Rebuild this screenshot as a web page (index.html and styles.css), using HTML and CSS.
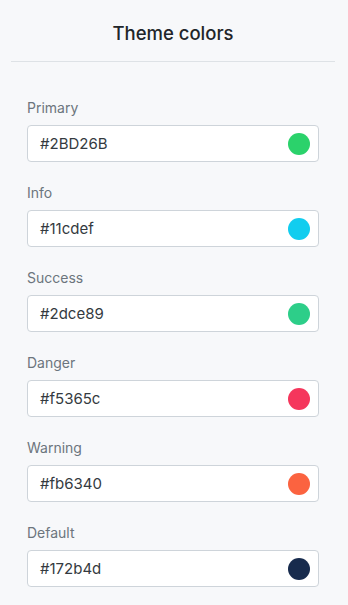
FILE: index.html
```html
<!DOCTYPE html>
<html lang="en">
<head>
<meta charset="utf-8">
<title>Theme colors</title>
<link rel="stylesheet" href="styles.css">
</head>
<body>
<div class="panel">
  <div class="header"><h1 class="title">Theme colors</h1></div>
  <div class="fields">
    <div class="field">
      <div class="label">Primary</div>
      <div class="input"><span class="value">#2BD26B</span><span class="swatch" style="background:#2BD26B"></span></div>
    </div>
    <div class="field">
      <div class="label">Info</div>
      <div class="input"><span class="value">#11cdef</span><span class="swatch" style="background:#11cdef"></span></div>
    </div>
    <div class="field">
      <div class="label">Success</div>
      <div class="input"><span class="value">#2dce89</span><span class="swatch" style="background:#2dce89"></span></div>
    </div>
    <div class="field">
      <div class="label">Danger</div>
      <div class="input"><span class="value">#f5365c</span><span class="swatch" style="background:#f5365c"></span></div>
    </div>
    <div class="field">
      <div class="label">Warning</div>
      <div class="input"><span class="value">#fb6340</span><span class="swatch" style="background:#fb6340"></span></div>
    </div>
    <div class="field">
      <div class="label">Default</div>
      <div class="input"><span class="value">#172b4d</span><span class="swatch" style="background:#172b4d"></span></div>
    </div>
  </div>
</div>
</body>
</html>
```
FILE: styles.css
```css
html, body {
  margin: 0;
  padding: 0;
  background: #f7f8fa;
}
body {
  font-family: Inter, "Noto Sans", sans-serif;
  padding: 0 13px 0 11px;
}
.header {
  padding: 20px 0 14px;
  border-bottom: 1px solid #dee2e6;
  text-align: center;
}
.title {
  margin: 0;
  font-size: 18.5px;
  line-height: 27px;
  font-weight: 500;
  color: #212529;
}
.fields {
  padding: 35px 16px 0;
  display: flex;
  flex-direction: column;
  gap: 20px;
}
.field {
  display: flex;
  flex-direction: column;
  gap: 7px;
}
.label {
  font-size: 14px;
  line-height: 21px;
  color: #6c757d;
}
.input {
  height: 35px;
  border: 1px solid #ced4da;
  border-radius: 4px;
  background: #fff;
  display: flex;
  align-items: center;
  justify-content: space-between;
  padding: 0 8px 0 12px;
}
.value {
  font-size: 15px;
  line-height: 22px;
  color: #343a40;
}
.swatch {
  width: 22px;
  height: 22px;
  border-radius: 50%;
}
```
